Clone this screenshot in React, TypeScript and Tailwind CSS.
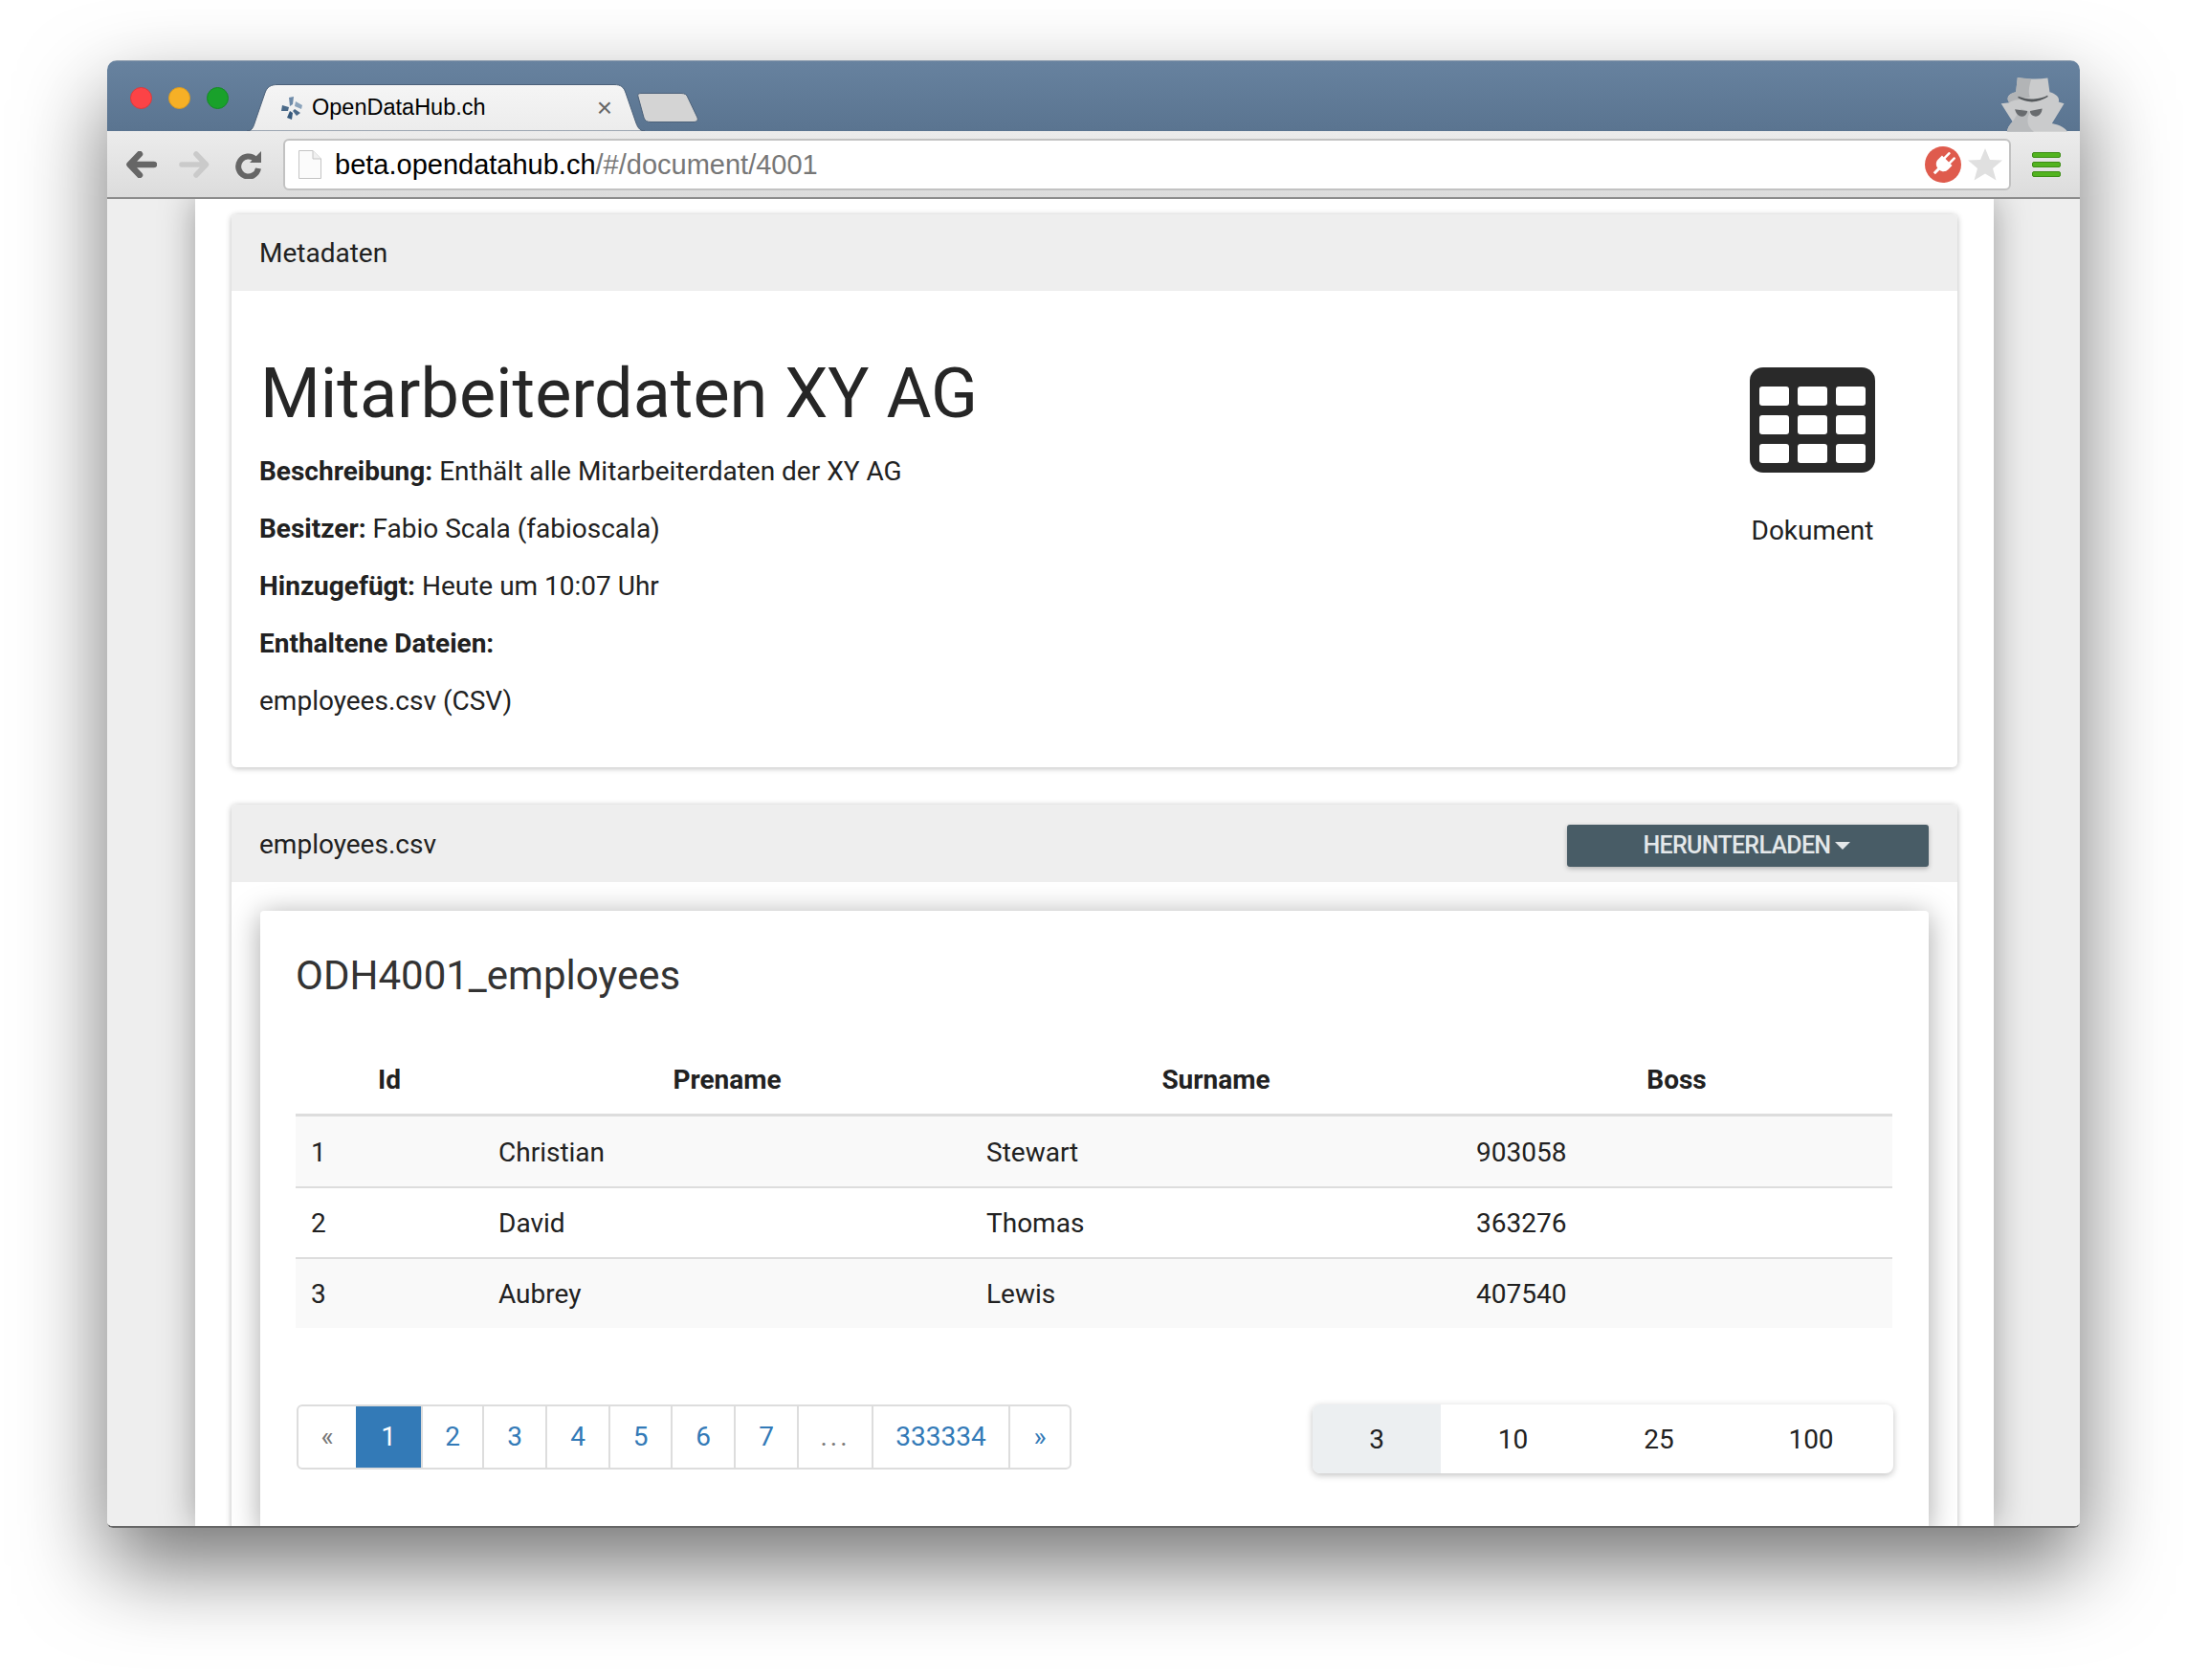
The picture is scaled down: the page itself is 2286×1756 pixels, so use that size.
const rows = [
  { id: 1, prename: "Christian", surname: "Stewart", boss: "903058" },
  { id: 2, prename: "David", surname: "Thomas", boss: "363276" },
  { id: 3, prename: "Aubrey", surname: "Lewis", boss: "407540" },
];

const pages = [
  { label: "«", w: "w-[60px]", cls: "text-[#777777]" },
  { label: "1", w: "w-[68px]", cls: "bg-[#337ab7] text-white" },
  { label: "2", w: "w-[64px]", cls: "text-[#337ab7]" },
  { label: "3", w: "w-[66px]", cls: "text-[#337ab7]" },
  { label: "4", w: "w-[66px]", cls: "text-[#337ab7]" },
  { label: "5", w: "w-[65px]", cls: "text-[#337ab7]" },
  { label: "6", w: "w-[66px]", cls: "text-[#337ab7]" },
  { label: "7", w: "w-[66px]", cls: "text-[#337ab7]" },
  { label: "...", w: "w-[78px]", cls: "text-[#777777] tracking-[3px]" },
  { label: "333334", w: "w-[143px]", cls: "text-[#337ab7]" },
  { label: "»", w: "w-[64px]", cls: "text-[#337ab7]" },
];

const sizes = [
  { label: "3", w: "w-[134px]", cls: "bg-[#eceff1]" },
  { label: "10", w: "w-[151px]", cls: "" },
  { label: "25", w: "w-[152px] pl-[2px]", cls: "" },
  { label: "100", w: "w-[170px] pr-[2px]", cls: "" },
];

function TabShape() {
  return (
    <svg className="absolute inset-0" width="416" height="49" viewBox="0 0 416 49">
      <defs>
        <linearGradient id="tabFill" x1="0" y1="0" x2="0" y2="1">
          <stop offset="0" stopColor="#f5f5f5" />
          <stop offset="1" stopColor="#ececec" />
        </linearGradient>
      </defs>
      <path
        d="M0 49 C6 49 7 44 9 38 L19 9 C21 3 25 0.500 32 0.500 L384 0.500 C391 0.500 394 3 396 9 L406 38 C408 44 410 49 416 49 Z"
        fill="url(#tabFill)"
        stroke="#4c6179"
        strokeWidth="1"
      />
    </svg>
  );
}

function Favicon() {
  return (
    <svg width="22" height="24" viewBox="0 0 22 24">
      <path d="M8 1 L13 0 L12 8 L9 10 Z" fill="#6d8aa8" />
      <path d="M15 5 L22 9 L21 13 L14 10 Z" fill="#8ba3bb" />
      <path d="M1 9 L8 11 L7 15 L0 15 Z" fill="#4a6988" />
      <path d="M14 13 L20 17 L16 20 L12 15 Z" fill="#4a6988" />
      <path d="M9 15 L12 17 L11 24 L6 22 Z" fill="#36597c" />
    </svg>
  );
}

function NewTab() {
  return (
    <svg width="64" height="31" viewBox="0 0 64 31">
      <path
        d="M1 4 C0 1 2 0.500 5 0.500 L46 0.500 C50 0.500 52 2 53 5 L63 26 C64 29 62 30.500 59 30.500 L14 30.500 C10 30.500 8 29 7 26 Z"
        fill="#d4d4d4"
        stroke="#4c6179"
      />
    </svg>
  );
}

function Incognito() {
  return (
    <svg width="70" height="59" viewBox="578 90 204 171">
      <path
        d="M630 95 C660 100 690 102 722 97 L728 140 C745 145 760 155 755 170 L772 175 L735 235 C760 240 778 250 782 261 L598 261 C600 245 610 235 615 230 L580 175 L605 172 C595 160 600 145 625 140 Z"
        fill="#cacbcc"
      />
      <path d="M630 95 L672 100 C665 125 662 140 668 155 C640 165 620 160 605 172 C595 160 600 145 625 140 Z" fill="#b2b4b6" />
      <path d="M640 190 L668 200 C655 225 660 245 680 261 L598 261 C600 245 610 235 615 230 Z" fill="#b9bbbd" />
      <path d="M632 155 C660 172 690 172 722 152 C700 164 660 168 632 155 Z" fill="#55595c" stroke="#55595c" strokeWidth="4" />
      <path d="M622 192 L660 197 C660 210 645 218 635 212 C628 208 624 200 622 192 Z" fill="#686b6e" />
      <path d="M668 197 L705 190 C705 205 692 218 680 213 C672 210 668 204 668 197 Z" fill="#686b6e" />
    </svg>
  );
}

function BackArrow({ color }: { color: string }) {
  return (
    <svg width="32" height="28" viewBox="0 0 32 28">
      <path d="M14 3 L3.500 14 L14 25 M4 14 L29 14" fill="none" stroke={color} strokeWidth="6.500" strokeLinecap="round" strokeLinejoin="round" />
    </svg>
  );
}

function ForwardArrow({ color }: { color: string }) {
  return (
    <svg width="32" height="28" viewBox="0 0 32 28">
      <path d="M18 3 L28.500 14 L18 25 M28 14 L3 14" fill="none" stroke={color} strokeWidth="5.500" strokeLinecap="round" strokeLinejoin="round" />
    </svg>
  );
}

function Reload() {
  return (
    <svg width="28" height="30" viewBox="0 0 28 30">
      <path d="M21 9.500 A10.500 10.500 0 1 0 24 19" fill="none" stroke="#666666" strokeWidth="6" />
      <path d="M15 13 L27 13 L27 1 Z" fill="#666666" />
    </svg>
  );
}

function FileIcon() {
  return (
    <svg width="24" height="30" viewBox="0 0 24 30">
      <path d="M0.500 0.500 L15 0.500 L23.500 9 L23.500 29.500 L0.500 29.500 Z" fill="#fbfbfb" stroke="#c4c4c4" />
      <path d="M15 0.500 L15 9 L23.500 9" fill="#f0f0f0" stroke="#c4c4c4" />
    </svg>
  );
}

function PlugBadge() {
  return (
    <svg width="38" height="38" viewBox="0 0 38 38">
      <circle cx="19" cy="19" r="19" fill="#df5b4d" />
      <g transform="rotate(45 19 19)" fill="#ffffff">
        <rect x="14" y="5" width="2.500" height="9" rx="1" />
        <rect x="21.500" y="5" width="2.500" height="9" rx="1" />
        <path d="M11.500 13 L26.500 13 L26.500 19 C26.500 23 23 25.500 20.500 25.500 L20.500 32 L17.500 32 L17.500 25.500 C15 25.500 11.500 23 11.500 19 Z" />
      </g>
    </svg>
  );
}

function Star() {
  return (
    <svg width="36" height="36" viewBox="0 0 36 36">
      <path d="M18 1 L23 13 L36 13.500 L26 22 L29.500 34.500 L18 27.500 L6.500 34.500 L10 22 L0 13.500 L13 13 Z" fill="#e0e0e0" />
    </svg>
  );
}

function TableIcon() {
  return (
    <svg width="131" height="110" viewBox="0 0 131 110">
      <rect width="131" height="110" rx="14" fill="#292929" />
      {[20, 50, 80].map((y) =>
        [10, 50, 90].map((x) => (
          <rect key={`${x}-${y}`} x={x} y={y} width="31" height="20" rx="3" fill="#ffffff" />
        ))
      )}
    </svg>
  );
}

export default function App() {
  return (
    <div className="w-[2286px] h-[1756px] bg-white pt-[63px] pl-[112px] overflow-hidden font-['Roboto',sans-serif] text-[#212121]">
      <div className="w-[2062px] h-[1534px] flex flex-col overflow-hidden rounded-t-[10px] rounded-b-[6px] shadow-[0_40px_90px_rgba(0,0,0,0.55)] border-b-2 border-[#666666]">
        {/* title bar */}
        <div className="relative h-[74px] shrink-0 flex items-start bg-[linear-gradient(#67829f,#5a7490)] border-t border-[#8a9aab]">
          <div className="flex gap-[17px] ml-[24px] mt-[27px]">
            <div className="w-[23px] h-[23px] rounded-full bg-[#fc4346] border border-[#d93a3c]" />
            <div className="w-[23px] h-[23px] rounded-full bg-[#f6b026] border border-[#d99a20]" />
            <div className="w-[23px] h-[23px] rounded-full bg-[#19a12b] border border-[#158a25]" />
          </div>
          <div className="relative w-[416px] h-[49px] ml-[19px] mt-[24px] flex items-center">
            <TabShape />
            <div className="relative flex items-center pl-[36px] w-full">
              <Favicon />
              <span className="ml-[10px] text-[23.5px] text-black font-['Liberation_Sans',sans-serif]">OpenDataHub.ch</span>
              <span className="ml-auto mr-[34px] text-[28px] leading-none text-[#666666] font-['Liberation_Sans',sans-serif]">×</span>
            </div>
          </div>
          <div className="-ml-[8px] mt-[33px] relative">
            <NewTab />
          </div>
          <div className="ml-auto mr-[13px] mt-[15px]">
            <Incognito />
          </div>
        </div>

        {/* toolbar */}
        <div className="h-[71px] shrink-0 flex items-center bg-[linear-gradient(#ececec,#dcdcdc)] border-b-2 border-[#8c8c8c]">
          <div className="ml-[20px]">
            <BackArrow color="#666666" />
          </div>
          <div className="ml-[23px]">
            <ForwardArrow color="#cacaca" />
          </div>
          <div className="ml-[27px]">
            <Reload />
          </div>
          <div className="ml-[22px] w-[1806px] h-[54px] flex items-center rounded-[6px] bg-white border-2 border-[#c2c2c2] pl-[14px] pr-[7px]">
            <FileIcon />
            <span className="ml-[14px] mt-[2px] text-[29px] text-black font-['Liberation_Sans',sans-serif]">
              beta.opendatahub.ch<span className="text-[#777777]">/#/document/4001</span>
            </span>
            <div className="ml-auto flex items-center gap-[7px]">
              <PlugBadge />
              <Star />
            </div>
          </div>
          <div className="ml-[22px] flex flex-col gap-[4px]">
            <div className="w-[30px] h-[6px] rounded-[2px] bg-[#52b31f] border border-[#3d8d16]" />
            <div className="w-[30px] h-[6px] rounded-[2px] bg-[#52b31f] border border-[#3d8d16]" />
            <div className="w-[30px] h-[6px] rounded-[2px] bg-[#52b31f] border border-[#3d8d16]" />
          </div>
        </div>

        {/* page */}
        <div className="flex-1 min-h-0 overflow-hidden bg-[#eeeeee] pl-[92px]">
          <div className="w-[1880px] h-full bg-white px-[38px] pt-[16px] shadow-[0_0_34px_rgba(0,0,0,0.35)]">
            <div className="rounded-[5px] bg-white shadow-[0_1px_6px_rgba(0,0,0,0.28)]">
              <div className="h-[80px] pt-[1px] flex items-center px-[29px] bg-[#eeeeee] rounded-t-[5px] text-[28px]">Metadaten</div>
              <div className="h-[498px] flex justify-between pl-[29px] pr-[30px] text-[28px]">
                <div>
                  <h1 className="ml-[1px] mt-[61px] text-[72px] leading-[94px] text-[#262626]">Mitarbeiterdaten XY AG</h1>
                  <div className="mt-[14px] flex flex-col gap-[20px] leading-[40px]">
                    <p><b className="font-bold">Beschreibung:</b> Enthält alle Mitarbeiterdaten der XY AG</p>
                    <p><b className="font-bold">Besitzer:</b> Fabio Scala (fabioscala)</p>
                    <p><b className="font-bold">Hinzugefügt:</b> Heute um 10:07 Uhr</p>
                    <p><b className="font-bold">Enthaltene Dateien:</b></p>
                    <p>employees.csv (CSV)</p>
                  </div>
                </div>
                <div className="w-[131px] mr-[56px] mt-[80px] flex flex-col items-center">
                  <TableIcon />
                  <div className="mt-[41px] text-[28px] leading-[40px]">Dokument</div>
                </div>
              </div>
            </div>

            <div className="mt-[39px] rounded-[5px] bg-white shadow-[0_1px_6px_rgba(0,0,0,0.28)]">
              <div className="h-[81px] pt-[3px] flex items-center justify-between pl-[29px] pr-[30px] bg-[#eeeeee] rounded-t-[5px] text-[28px]">
                <span>employees.csv</span>
                <button className="w-[378px] h-[44px] mt-[2px] pr-[2px] flex items-center justify-center gap-[5px] rounded-[3px] bg-[#485c66] text-[#e4e8ea] text-[25px] font-medium tracking-[-0.7px] shadow-[0_2px_5px_rgba(0,0,0,0.25)]">
                  HERUNTERLADEN
                  <span className="w-0 h-0 border-x-[8px] border-x-transparent border-t-[8px] border-t-[#e4e8ea]" />
                </button>
              </div>
              <div className="px-[30px] pt-[30px]">
                <div className="rounded-[4px] bg-white px-[37px] pb-[60px] shadow-[0_4px_30px_rgba(0,0,0,0.35)]">
                  <h2 className="pt-[41px] text-[42px] leading-[54px] text-[#333333]">ODH4001_employees</h2>
                  <table className="mt-[47px] w-[1669px] table-fixed border-collapse text-[28px]">
                    <colgroup>
                      <col className="w-[196px]" />
                      <col className="w-[510px]" />
                      <col className="w-[512px]" />
                      <col className="w-[451px]" />
                    </colgroup>
                    <thead>
                      <tr className="h-[71px] border-b-[3px] border-[#dddddd]">
                        <th className="font-bold text-center">Id</th>
                        <th className="font-bold text-center">Prename</th>
                        <th className="font-bold text-center">Surname</th>
                        <th className="font-bold text-center">Boss</th>
                      </tr>
                    </thead>
                    <tbody>
                      {rows.map((row) => (
                        <tr
                          key={row.id}
                          className={row.id === 1 ? "h-[76px] bg-[#f9f9f9] border-b-2 border-[#dddddd]" : row.id === 2 ? "h-[74px] bg-white border-b-2 border-[#dddddd]" : "h-[73px] bg-[#f9f9f9]"}
                        >
                          <td className={row.id === 1 ? "px-[16px] pt-[4px]" : "px-[16px] pt-[2px]"}>{row.id}</td>
                          <td className={row.id === 1 ? "px-[16px] pt-[4px]" : "px-[16px] pt-[2px]"}>{row.prename}</td>
                          <td className={row.id === 1 ? "px-[16px] pt-[4px]" : "px-[16px] pt-[2px]"}>{row.surname}</td>
                          <td className={row.id === 1 ? "px-[16px] pt-[4px]" : "px-[16px] pt-[2px]"}>{row.boss}</td>
                        </tr>
                      ))}
                    </tbody>
                  </table>
                  <div className="mt-[80px] flex items-start justify-between">
                    <div className="ml-[1px] flex h-[68px] rounded-[6px] border-2 border-[#dddddd] overflow-hidden">
                      {pages.map((p, i) => (
                        <div
                          key={p.label}
                          className={`${p.w} flex items-center justify-center text-[28px] ${p.cls} ${i > 1 ? "border-l-2 border-[#dddddd]" : ""}`}
                        >
                          {p.label}
                        </div>
                      ))}
                    </div>
                    <div className="flex h-[72px] rounded-[8px] overflow-hidden shadow-[0_2px_7px_rgba(0,0,0,0.25)]">
                      {sizes.map((s) => (
                        <div key={s.label} className={`${s.w} pt-[2px] flex items-center justify-center text-[28px] ${s.cls}`}>
                          {s.label}
                        </div>
                      ))}
                    </div>
                  </div>
                </div>
              </div>
            </div>
          </div>
        </div>
      </div>
    </div>
  );
}
